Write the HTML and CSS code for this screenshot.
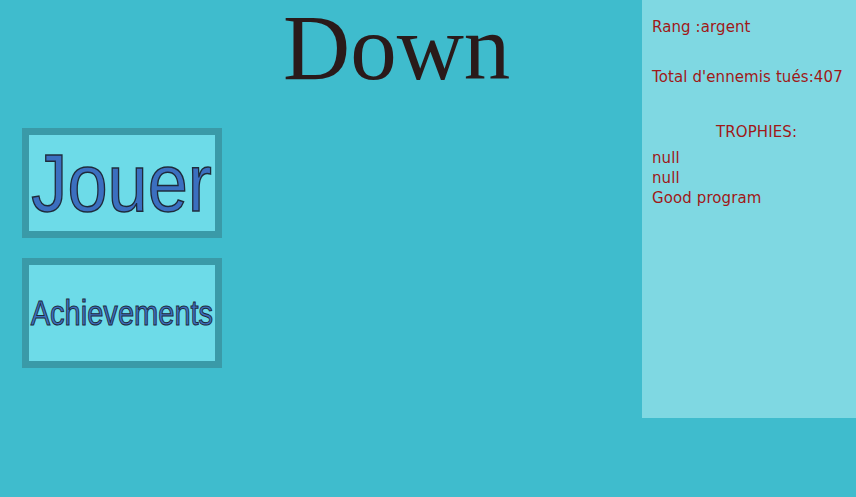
FILE: index.html
```html
<!DOCTYPE html>
<html lang="fr">
<head>
<meta charset="utf-8">
<title>Down</title>
<link rel="stylesheet" href="styles.css">
</head>
<body>
<div class="page">
  <main class="main">
    <div class="title-row"><h1 class="title">Down</h1></div>
    <div class="buttons">
      <a class="btn btn-play"><span class="btn-label">Jouer</span></a>
      <a class="btn btn-ach"><span class="btn-label">Achievements</span></a>
    </div>
  </main>
  <aside class="panel">
    <p class="line rank">Rang :argent</p>
    <p class="line kills">Total d'ennemis tués:407</p>
    <p class="line trophies-head">TROPHIES:</p>
    <ul class="trophies">
      <li>null</li>
      <li>null</li>
      <li>Good program</li>
    </ul>
  </aside>
</div>
</body>
</html>
```
FILE: styles.css
```css
html, body {
  margin: 0;
  padding: 0;
  background: #3fbccd;
  width: 856px;
  height: 497px;
  overflow: hidden;
}
.page {
  display: flex;
  align-items: flex-start;
}
.main {
  flex: 1;
  display: flex;
  flex-direction: column;
}
.title-row {
  height: 128px;
  padding-left: 283px;
}
.title {
  display: inline-block;
  margin: 0;
  font-family: "Liberation Serif", serif;
  font-weight: normal;
  font-size: 93px;
  line-height: 96px;
  padding-bottom: 8px;
  color: #2a1a1a;
}
.buttons {
  display: flex;
  flex-direction: column;
  gap: 20px;
  padding-left: 22px;
}
.btn {
  box-sizing: border-box;
  width: 200px;
  height: 110px;
  border: 7px solid #3a9aa8;
  background: #6ddbe8;
  display: flex;
  align-items: center;
  justify-content: center;
  font-family: "Liberation Sans", Arial, sans-serif;
  color: #3b6fc0;
  overflow: hidden;
  white-space: nowrap;
}
.btn-label {
  display: inline-block;
}
.btn-play {
  font-size: 82px;
  line-height: 82px;
  -webkit-text-stroke: 1.5px #1f2a3a;
}
.btn-play .btn-label {
  transform: scaleX(0.88);
}
.btn-ach {
  font-size: 35px;
  line-height: 40px;
  -webkit-text-stroke: 1px #1f2a3a;
}
.btn-ach .btn-label {
  transform: scaleX(0.83);
}
.panel {
  width: 214px;
  height: 418px;
  box-sizing: border-box;
  background: #7fd8e2;
  padding: 17px 0 0 10px;
  font-family: "DejaVu Sans", sans-serif;
  font-size: 15px;
  color: #a01818;
}
.line {
  margin: 0;
  line-height: 20px;
  letter-spacing: 0.1px;
}
.kills { margin-top: 30px; }
.trophies-head {
  margin-top: 35px;
  text-align: center;
  padding-left: 5px;
}
.trophies {
  list-style: none;
  margin: 6px 0 0;
  padding: 0;
  line-height: 20px;
  letter-spacing: 0.1px;
}
```
